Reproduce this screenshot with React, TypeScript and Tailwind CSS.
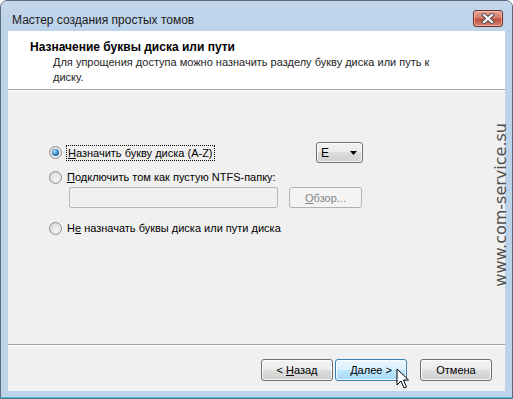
import React from 'react';

const font = { fontFamily: '"Liberation Sans", Arial, sans-serif' };

const Radio = ({ checked }: { checked?: boolean }) => (
    <div className="w-[13px] h-[13px] shrink-0 rounded-full border border-[#8f8f8f] bg-[linear-gradient(135deg,#d2d2d2,#f6f6f6)] flex items-center justify-center">
        {checked ? (
            <div className="w-[7px] h-[7px] rounded-full bg-[radial-gradient(circle_at_40%_35%,#b6e2fb,#3a8ccc_45%,#0f3f6b)]" />
        ) : (
            <div className="w-[9px] h-[9px] rounded-full bg-[linear-gradient(135deg,#dedede,#fbfbfb)] border border-[#e6e6e6]" />
        )}
    </div>
);

const WinButton = ({ children, active }: { children: React.ReactNode; active?: boolean }) => (
    <div
        className={`w-[72px] h-[22px] rounded-[3px] border flex items-center justify-center text-[11px] leading-[14px] text-black shadow-[inset_0_0_0_1px_rgba(255,255,255,0.8)] ${
            active
                ? 'border-[#3c7fb1] bg-[linear-gradient(#eaf6fd_0%,#d9f0fc_50%,#bee6fd_50%,#a7d9f5_100%)]'
                : 'border-[#707070] bg-[linear-gradient(#f2f2f2_0%,#ebebeb_50%,#dddddd_50%,#cfcfcf_100%)]'
        }`}
    >
        {children}
    </div>
);

export default function App() {
    return (
        <div className="w-[513px] h-[399px] bg-white" style={font}>
            <div className="relative w-[513px] h-[399px] border border-[#5d6b7a] rounded-t-[7px] bg-[#bcd3ea] flex flex-col overflow-hidden">
                {/* Title bar */}
                <div className="h-[30px] shrink-0 flex items-start bg-[linear-gradient(#c3d6ec,#bcd3ea)]">
                    <span className="pl-[11px] pt-[12px] text-[12px] leading-[14px] text-[#1b1b1b]">Мастер создания простых томов</span>
                    <div className="ml-auto mr-[9px] mt-[9px] w-[30px] h-[17px] rounded-[3px] border border-[#6f2f28] bg-[linear-gradient(#e8a699_0%,#d27a6a_45%,#c14f3c_55%,#d1806f_100%)] flex items-center justify-center shadow-[inset_0_0_0_1px_rgba(255,220,210,0.5)]">
                        <svg width="14" height="11" viewBox="0 0 14 11">
                            <path d="M3 2 L11 9 M11 2 L3 9" stroke="#4a4a4a" strokeWidth="4" strokeLinecap="square" />
                            <path d="M3 2 L11 9 M11 2 L3 9" stroke="#ffffff" strokeWidth="2.2" strokeLinecap="square" />
                        </svg>
                    </div>
                </div>

                {/* Client area */}
                <div className="mx-[7px] h-[360px] shrink-0 bg-[#f0f0f0] flex flex-col">
                    <div className="h-[58px] bg-white pt-[9px]">
                        <div className="pl-[22px] text-[12px] leading-[15px] font-bold text-black">Назначение буквы диска или пути</div>
                        <div className="pl-[45px] text-[11px] leading-[15px] text-[#1e1e1e]">
                            Для упрощения доступа можно назначить разделу букву диска или путь к<br />
                            диску.
                        </div>
                    </div>
                    <div className="h-px bg-[#a0a0a0]" />
                    <div className="h-px bg-white" />

                    {/* Options */}
                    <div className="flex-1 pt-[51px] text-[11px] leading-[14px] text-black">
                        <div className="flex items-center pl-[41px]">
                            <div className="w-[267px] flex items-center">
                                <Radio checked />
                                <span className="ml-[4px] border border-dotted border-black px-px">
                                    <span className="underline">Н</span>азначить букву диска (A-Z)
                                </span>
                            </div>
                            <div className="w-[47px] h-[21px] rounded-[3px] border border-[#707070] bg-[linear-gradient(#f2f2f2_0%,#ebebeb_50%,#dddddd_50%,#cfcfcf_100%)] shadow-[inset_0_0_0_1px_rgba(255,255,255,0.8)] flex items-center pl-[4px] pr-[5px] text-[12px]">
                                <span>E</span>
                                <svg className="ml-auto" width="7" height="4" viewBox="0 0 7 4">
                                    <path d="M0 0 H7 L3.5 4 Z" fill="#000" />
                                </svg>
                            </div>
                        </div>

                        <div className="flex items-center pl-[41px] mt-[6px] h-[16px]">
                            <Radio />
                            <span className="ml-[5px]">
                                <span className="underline">П</span>одключить том как пустую NTFS-папку:
                            </span>
                        </div>

                        <div className="flex pl-[61px] mt-[2px]">
                            <div className="w-[209px] h-[21px] border border-[#b5b9bf] rounded-[2px] bg-[#f0f0f0]" />
                            <div className="ml-[11px] w-[73px] h-[21px] rounded-[3px] border border-[#adb2b5] bg-[#f4f4f4] flex items-center justify-center text-[#838383]">
                                <span><span className="underline">О</span>бзор...</span>
                            </div>
                        </div>

                        <div className="flex items-center pl-[41px] mt-[12px] h-[16px]">
                            <Radio />
                            <span className="ml-[5px]">
                                Н<span className="underline">е</span> назначать буквы диска или пути диска
                            </span>
                        </div>
                    </div>

                    <div className="h-px bg-[#a0a0a0]" />
                    <div className="h-px bg-white" />
                    <div className="h-[45px] shrink-0 flex items-start justify-end pt-[13px] pr-[13px]">
                        <WinButton>
                            <span>&lt; <span className="underline">Н</span>азад</span>
                        </WinButton>
                        <div className="ml-[2px]">
                            <WinButton active>
                                <span><span className="underline">Д</span>алее &gt;</span>
                            </WinButton>
                        </div>
                        <div className="ml-[13px]">
                            <WinButton>Отмена</WinButton>
                        </div>
                    </div>
                </div>
                <div className="flex-1 border-b border-[#3fc3e6]" />

                {/* Watermark */}
                <div
                    className="absolute left-[492px] top-[122px] text-[16px] leading-[15px] text-[#505050] [writing-mode:vertical-rl] rotate-180"
                    style={{ fontFamily: '"DejaVu Sans", sans-serif' }}
                >
                    www.com-service.su
                </div>

                {/* Mouse cursor */}
                <svg className="absolute left-[395px] top-[367px]" width="14" height="22" viewBox="0 0 14 22">
                    <path
                        d="M1 1 L1 17 L5 13 L8 20 L10.5 19 L7.5 12 L12.5 12 Z"
                        fill="#fff"
                        stroke="#000"
                        strokeWidth="1"
                        strokeLinejoin="miter"
                    />
                </svg>
            </div>
        </div>
    );
}
